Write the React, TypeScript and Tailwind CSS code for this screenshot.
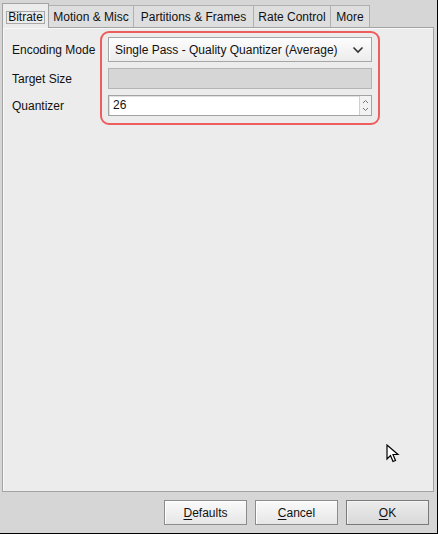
import React from "react";

const font = { fontFamily: '"Liberation Sans", Arial, sans-serif' };

function Tab({ label, w, selected }: { label: string; w: number; selected?: boolean }) {
  if (selected) {
    return (
      <div
        className="relative z-10 h-[25px] mb-[-1px] bg-[#ececec] border-l border-t border-r border-[#a3a3a3] flex items-start justify-center pt-[7px] shrink-0"
        style={{ width: w }}
      >
        <span className="border border-[#a8a8a8] px-[1px] leading-[11px] h-[13px] text-[12px] text-[#111]">{label}</span>
      </div>
    );
  }
  return (
    <div
      className="h-[22px] bg-[#dedede] border-t border-r border-[#b0b0b0] flex items-center justify-center text-[12px] text-[#111] shrink-0"
      style={{ width: w }}
    >
      {label}
    </div>
  );
}

function Btn({ first, rest, dark }: { first: string; rest: string; dark?: boolean }) {
  return (
    <div
      className={
        "w-[83px] h-[25px] border flex items-center justify-center text-[12px] text-[#111] " +
        (dark
          ? "border-[#7a7a7a] bg-gradient-to-b from-[#ececec] to-[#d9d9d9] shadow-[inset_1px_1px_0_#f4f4f4]"
          : "border-[#8c8c8c] bg-gradient-to-b from-[#fafafa] to-[#e6e6e6] shadow-[inset_1px_1px_0_#ffffff]")
      }
    >
      <span>
        <span className="underline underline-offset-2">{first}</span>
        {rest}
      </span>
    </div>
  );
}

export default function App() {
  return (
    <div
      className="w-[438px] h-[534px] bg-[#d6d6d6] border-r border-b border-black flex flex-col pl-[2px] pt-[3px] pr-[3px] overflow-hidden relative"
      style={font}
    >
      {/* tabs */}
      <div className="h-[24px] flex items-end">
        <Tab label="Bitrate" w={47} selected />
        <Tab label="Motion & Misc" w={85} />
        <Tab label="Partitions & Frames" w={120} />
        <Tab label="Rate Control" w={77} />
        <Tab label="More" w={39} />
      </div>

      {/* panel */}
      <div className="h-[465px] border border-[#a3a3a3] bg-[#ececec] relative shadow-[inset_1px_1px_0_#f8f8f8]">
        <div className="pt-[9px] pl-[9px] grid grid-cols-[96px_264px] gap-y-[6px] items-center text-[12px] text-[#111]">
          <div>Encoding Mode</div>
          <div className="h-[25px] border border-[#a6a6a6] bg-gradient-to-b from-[#fdfdfd] to-[#ececec] flex items-center pl-[6px] pr-[6px] shadow-[inset_1px_1px_0_#ffffff]">
            <span className="flex-1">Single Pass - Quality Quantizer (Average)</span>
            <svg width="12" height="8" viewBox="0 0 12 8" className="mr-[1px]">
              <path d="M1.5 1.5 L6 6 L10.5 1.5" fill="none" stroke="#333" strokeWidth="1.6" />
            </svg>
          </div>

          <div>Target Size</div>
          <div className="h-[21px] border border-[#b4b4b4] bg-[#d6d6d6]" />

          <div>Quantizer</div>
          <div className="h-[21px] border border-[#a2a2a2] bg-white flex shadow-[inset_1px_1px_0_#e0e0e0]">
            <span className="flex-1 pl-[4px] leading-[19px]">26</span>
            <div className="w-[12px] border-l border-[#d0d0d0] bg-[#f2f2f2] flex flex-col items-center justify-center gap-[3px]">
              <svg width="7" height="5" viewBox="0 0 7 5">
                <path d="M1 4 L3.5 1.5 L6 4" fill="none" stroke="#777" strokeWidth="1" />
              </svg>
              <svg width="7" height="5" viewBox="0 0 7 5">
                <path d="M1 1 L3.5 3.5 L6 1" fill="none" stroke="#777" strokeWidth="1" />
              </svg>
            </div>
          </div>
        </div>

        {/* red highlight annotation */}
        <div className="absolute left-[97px] top-[3px] w-[280px] h-[94px] border-2 border-[#ee5d5d] rounded-[9px] pointer-events-none" />

        {/* mouse cursor */}
        <svg
          className="absolute left-[383px] top-[416px]"
          width="14"
          height="20"
          viewBox="0 0 14 20"
        >
          <path
            d="M1 1 L1 15 L4.5 11.5 L7 17.5 L9.5 16.5 L7 10.5 L12 10.5 Z"
            fill="#fff"
            stroke="#000"
            strokeWidth="1.2"
            strokeLinejoin="miter"
          />
        </svg>
      </div>

      {/* buttons */}
      <div className="flex justify-end gap-[8px] pt-[8px] pr-[5px]">
        <Btn first="D" rest="efaults" />
        <Btn first="C" rest="ancel" />
        <Btn first="O" rest="K" dark />
      </div>
    </div>
  );
}
